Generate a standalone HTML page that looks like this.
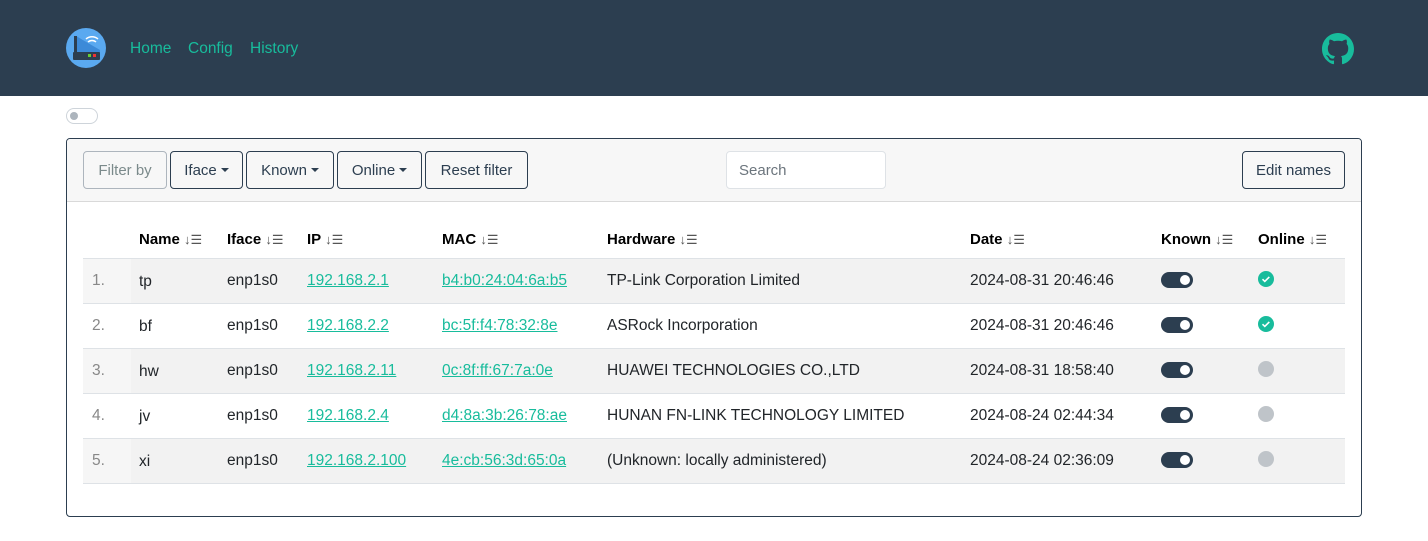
<!DOCTYPE html>
<html><head><style>
*{box-sizing:border-box;margin:0;padding:0}
body{width:1428px;height:541px;background:#fff;font-family:"Liberation Sans",sans-serif;font-size:15.5px;color:#212529;position:relative;overflow:hidden}
.nav{position:absolute;left:0;top:0;width:1428px;height:96px;background:#2c3e50}
.nav a{position:absolute;top:40px;color:#18bc9c;font-size:15.5px;text-decoration:none}
.tog{position:absolute;left:66px;top:108px;width:32px;height:16px;border:1px solid #ced4da;border-radius:8px}
.tog:after{content:"";position:absolute;left:3px;top:3px;width:8px;height:8px;border-radius:50%;background:#adb5bd}
.card{position:absolute;left:66px;top:138px;width:1296px;height:379px;border:1px solid #2c3e50;border-radius:4px;overflow:hidden}
.ch{position:absolute;left:0;top:0;width:100%;height:63px;background:#f7f7f7;border-bottom:1px solid #d9d9d9}
.btn{position:absolute;top:12px;height:38px;border:1px solid #2c3e50;border-radius:4px;line-height:38px;text-align:center;color:#2c3e50;font-size:15px}
.car{display:inline-block;border-left:4px solid transparent;border-right:4px solid transparent;border-top:4px solid #2c3e50;vertical-align:middle;margin-left:4px;margin-top:-2px}
.search{position:absolute;left:659px;top:12px;width:160px;height:38px;border:1px solid #dee2e6;border-radius:4px;background:#fff;line-height:38px;padding-left:12px;color:#6c757d;font-size:15px}
.th{position:absolute;top:92px;font-weight:bold;font-size:15px;color:#000}
.th span{font-weight:normal;color:#555;font-size:13px}
.row{position:absolute;left:16px;width:1262px;height:45px;border-top:1px solid #dee2e6}
.row.odd{background:#f2f2f2}
.row .n{position:absolute;left:0;top:0;width:48px;height:44px;background:#f6f6f6}
.row div{position:absolute}
.c{top:13px}
.row .num{left:9px;top:13px;color:#888}
a.l{color:#18bc9c;text-decoration:underline}
.sw{top:13px;width:32px;height:16px;border-radius:8px;background:#2c3e50}
.sw:after{content:"";position:absolute;right:3px;top:3px;width:10px;height:10px;border-radius:50%;background:#fff}
.dot{top:12px;width:16px;height:16px;border-radius:50%;background:#bfc4c9}
.ok{background:#18bc9c}
</style></head><body>
<div class="nav">
<svg style="position:absolute;left:66px;top:28px" width="40" height="40" viewBox="0 0 40 40"><circle cx="20" cy="20" r="20" fill="#5aa9f0"/><path d="M10 8 L10 30 L34 30 L34 22 Z" fill="#3c8ad8"/><rect x="8" y="8" width="3" height="18" fill="#2c3e50"/><rect x="7" y="24" width="27" height="8" rx="1" fill="#2c3e50"/><rect x="22" y="26" width="3" height="3" fill="#6c3"/><rect x="27" y="26" width="3" height="3" fill="#e33"/><path d="M22 14 a6 6 0 0 1 8 0 M20 11 a9 9 0 0 1 12 0" stroke="#fff" stroke-width="1.5" fill="none"/></svg>
<a style="left:130px">Home</a><a style="left:188px">Config</a><a style="left:250px">History</a>
<svg style="position:absolute;left:1322px;top:33px" width="32" height="32" viewBox="0 0 16 16"><path fill="#18bc9c" d="M8 0C3.58 0 0 3.58 0 8c0 3.54 2.290 6.53 5.47 7.59.4.07.55-.17.55-.38 0-.19-.01-.82-.01-1.490-2.01.37-2.53-.49-2.69-.94-.09-.23-.48-.94-.82-1.13-.28-.15-.68-.52-.01-.53.63-.01 1.08.58 1.230.82.72 1.21 1.87.87 2.33.66.07-.52.28-.87.51-1.07-1.78-.2-3.64-.89-3.64-3.95 0-.87.31-1.59.82-2.15-.08-.2-.36-1.02.08-2.12 0 0 .67-.21 2.2.82.64-.18 1.32-.27 2-.27.68 0 1.36.09 2 .27 1.53-1.04 2.2-.82 2.2-.82.44 1.1.16 1.920.08 2.12.51.56.82 1.27.82 2.15 0 3.07-1.87 3.75-3.65 3.95.29.25.54.73.54 1.48 0 1.07-.01 1.93-.01 2.2 0 .21.15.46.55.38A8.013 8.013 0 0016 8c0-4.42-3.58-8-8-8z"/></svg>
</div>
<div class="tog"></div>
<div class="card">
<div class="ch">
<div class="btn" style="left:16px;width:84px;border-color:#adb5bd;color:#7b8a8b">Filter by</div>
<div class="btn" style="left:103px;width:73px">Iface<i class="car"></i></div>
<div class="btn" style="left:179px;width:88px">Known<i class="car"></i></div>
<div class="btn" style="left:270px;width:85px">Online<i class="car"></i></div>
<div class="btn" style="left:358px;width:103px">Reset filter</div>
<div class="search">Search</div>
<div class="btn" style="left:1175px;width:103px">Edit names</div>
</div>
<div class="th" style="left:72px">Name <span>↓☰</span></div>
<div class="th" style="left:160px">Iface <span>↓☰</span></div>
<div class="th" style="left:240px">IP <span>↓☰</span></div>
<div class="th" style="left:375px">MAC <span>↓☰</span></div>
<div class="th" style="left:540px">Hardware <span>↓☰</span></div>
<div class="th" style="left:903px">Date <span>↓☰</span></div>
<div class="th" style="left:1094px">Known <span>↓☰</span></div>
<div class="th" style="left:1191px">Online <span>↓☰</span></div>

<div class="row odd" style="top:119px"><div class="n"></div><div class="num">1.</div><div class="c" style="left:56px;top:14px">tp</div><div class="c" style="left:144px">enp1s0</div><div class="c" style="left:224px"><a class="l">192.168.2.1</a></div><div class="c" style="left:359px"><a class="l">b4:b0:24:04:6a:b5</a></div><div class="c" style="left:524px">TP-Link Corporation Limited</div><div class="c" style="left:887px">2024-08-31 20:46:46</div><div class="sw" style="left:1078px"></div><div class="dot ok" style="left:1175px"><svg width="16" height="16"><path d="M4.5 8.2l2.3 2.2 4.5-4.5" stroke="#fff" stroke-width="1.6" fill="none"/></svg></div></div>
<div class="row" style="top:164px"><div class="num">2.</div><div class="c" style="left:56px;top:14px">bf</div><div class="c" style="left:144px">enp1s0</div><div class="c" style="left:224px"><a class="l">192.168.2.2</a></div><div class="c" style="left:359px"><a class="l">bc:5f:f4:78:32:8e</a></div><div class="c" style="left:524px">ASRock Incorporation</div><div class="c" style="left:887px">2024-08-31 20:46:46</div><div class="sw" style="left:1078px"></div><div class="dot ok" style="left:1175px"><svg width="16" height="16"><path d="M4.5 8.2l2.3 2.2 4.5-4.5" stroke="#fff" stroke-width="1.6" fill="none"/></svg></div></div>
<div class="row odd" style="top:209px"><div class="n"></div><div class="num">3.</div><div class="c" style="left:56px;top:14px">hw</div><div class="c" style="left:144px">enp1s0</div><div class="c" style="left:224px"><a class="l">192.168.2.11</a></div><div class="c" style="left:359px"><a class="l">0c:8f:ff:67:7a:0e</a></div><div class="c" style="left:524px">HUAWEI TECHNOLOGIES CO.,LTD</div><div class="c" style="left:887px">2024-08-31 18:58:40</div><div class="sw" style="left:1078px"></div><div class="dot" style="left:1175px"></div></div>
<div class="row" style="top:254px"><div class="num">4.</div><div class="c" style="left:56px;top:14px">jv</div><div class="c" style="left:144px">enp1s0</div><div class="c" style="left:224px"><a class="l">192.168.2.4</a></div><div class="c" style="left:359px"><a class="l">d4:8a:3b:26:78:ae</a></div><div class="c" style="left:524px">HUNAN FN-LINK TECHNOLOGY LIMITED</div><div class="c" style="left:887px">2024-08-24 02:44:34</div><div class="sw" style="left:1078px"></div><div class="dot" style="left:1175px"></div></div>
<div class="row odd" style="top:299px;border-bottom:1px solid #dee2e6;height:46px"><div class="n"></div><div class="num">5.</div><div class="c" style="left:56px;top:14px">xi</div><div class="c" style="left:144px">enp1s0</div><div class="c" style="left:224px"><a class="l">192.168.2.100</a></div><div class="c" style="left:359px"><a class="l">4e:cb:56:3d:65:0a</a></div><div class="c" style="left:524px">(Unknown: locally administered)</div><div class="c" style="left:887px">2024-08-24 02:36:09</div><div class="sw" style="left:1078px"></div><div class="dot" style="left:1175px"></div></div>
</div>
</body></html>
